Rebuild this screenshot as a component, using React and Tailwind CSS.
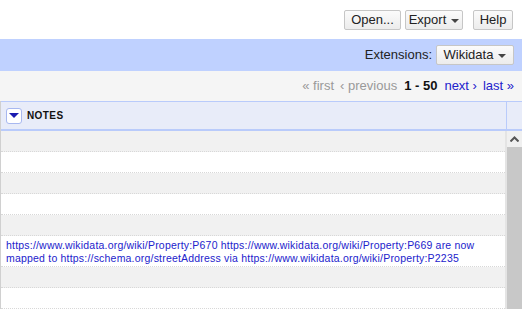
import React from "react";

const btn =
  "h-[20px] flex items-center justify-center gap-[5px] text-[13px] text-[#222] border border-[#c6c6c6] rounded-[2px] bg-gradient-to-b from-[#fbfbfb] to-[#ececec]";

function Caret() {
  return <span className="inline-block w-0 h-0 border-l-[4px] border-r-[4px] border-t-[4px] border-l-transparent border-r-transparent border-t-[#444] mt-[1px]" />;
}

const rows = [0, 1, 2, 3, 4, "text", 6, 7];

export default function App() {
  return (
    <div className="w-[522px] h-[311px] overflow-hidden bg-white font-['Liberation_Sans',Arial,sans-serif]">
      {/* toolbar */}
      <div className="h-[39px] flex items-start justify-end pt-[10px] pr-[9px]">
        <button className={btn + " w-[57px]"}>Open...</button>
        <button className={btn + " w-[58px] ml-[4px]"}>
          Export <Caret />
        </button>
        <button className={btn + " w-[40px] ml-[10px]"}>Help</button>
      </div>

      {/* extensions bar */}
      <div className="h-[32px] bg-[#bfd1ff] flex items-center justify-end pr-[8px] gap-[4px] text-[13px] text-[#222]">
        <span>Extensions:</span>
        <button className={btn + " w-[78px]"}>
          Wikidata <Caret />
        </button>
      </div>

      {/* pager */}
      <div className="h-[30px] bg-[#f5f5f5] flex items-center justify-end pr-[8px] text-[13px] gap-[6px]">
        <span className="text-[#999]">« first</span>
        <span className="text-[#999]">‹ previous</span>
        <span className="font-bold text-[#111] px-[1px]">1 - 50</span>
        <span className="text-[#2222cc]">next ›</span>
        <span className="text-[#2222cc]">last »</span>
      </div>

      {/* table */}
      <div className="border-l border-[#d0d0d0]">
        <div className="h-[30px] flex bg-[#e8ecf9] border-t border-b-2 border-[#b9cbfb]">
          <div className="flex-1 flex items-center gap-[5px] pl-[5px] border-r border-[#b9cbfb]">
            <span className="w-[16px] h-[16px] bg-white border border-[#a8b8f0] rounded-[3px] flex items-center justify-center">
              <span className="w-0 h-0 border-l-[5px] border-r-[5px] border-t-[5px] border-l-transparent border-r-transparent border-t-[#1a1ab0]" />
            </span>
            <span className="text-[10px] font-bold text-[#111] tracking-[0.4px]">NOTES</span>
          </div>
          <div className="w-[15px]" />
        </div>

        <div className="flex">
          <div className="flex-1 border-r-2 border-[#e4e4e4]">
            {rows.map((r, i) =>
              r === "text" ? (
                <div key={i} className="h-[31px] bg-white border-b border-dotted border-[#d8d8d8] px-[5px] pt-[3px] text-[10.5px] leading-[13px] tracking-[0.2px] text-[#2222cc]">
                  https://www.wikidata.org/wiki/Property:P670 https://www.wikidata.org/wiki/Property:P669 are now mapped to https://schema.org/streetAddress via https://www.wikidata.org/wiki/Property:P2235
                </div>
              ) : (
                <div key={i} className={"h-[21px] border-b border-dotted border-[#d8d8d8] " + (i % 2 === 0 ? "bg-[#f1f1f1]" : "bg-white")} />
              )
            )}
          </div>
          <div className="w-[15px] flex flex-col bg-[#f0f0f0]">
            <div className="h-[16px] flex items-center justify-center">
              <svg width="9" height="6" viewBox="0 0 9 6">
                <path d="M0.5 5.5 L4.5 1.5 L8.5 5.5" fill="none" stroke="#555" strokeWidth="2" />
              </svg>
            </div>
            <div className="flex-1 bg-[#c8c8c8]" />
          </div>
        </div>
      </div>
    </div>
  );
}
